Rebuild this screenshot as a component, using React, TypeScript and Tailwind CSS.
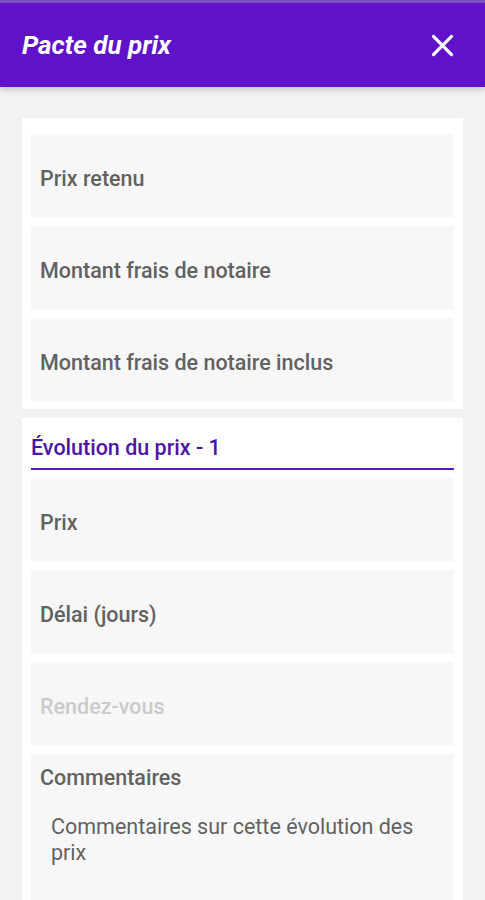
import React from 'react';

const fields = ['Prix retenu', 'Montant frais de notaire', 'Montant frais de notaire inclus'];

const Field = ({ label, placeholder }: { label: string; placeholder?: boolean }) => (
  <div className="h-[83px] bg-[#f7f7f7] flex items-center pt-2 px-[9px]">
    <span className={`text-[21.5px] font-medium ${placeholder ? 'text-[#cbcbcb]' : 'text-[#626262]'}`}>{label}</span>
  </div>
);

const App: React.FC = () => {
  return (
    <div className="min-h-screen bg-[#f2f2f2] overflow-hidden" style={{ fontFamily: 'Roboto, "Noto Sans", sans-serif' }}>
      {/* header */}
      <div className="border-t-[3px] border-[#7a4cc6] bg-[#5f12c9] h-[87px] flex items-center justify-between pl-[22px] pr-[27px] shadow-[0_3px_6px_rgba(0,0,0,0.18)]">
        <h1 className="text-white text-[26px] font-bold italic">Pacte du prix</h1>
        <svg width="31" height="31" viewBox="0 0 24 24" fill="none" stroke="white" strokeWidth="2.5" strokeLinecap="round">
          <path d="M5 5L19 19M19 5L5 19" />
        </svg>
      </div>

      <div className="px-[22px] pt-[31px] flex flex-col gap-[9px]">
        <div className="bg-white px-[9px] pt-4 pb-2 flex flex-col gap-[9px]">
          {fields.map(f => (
            <Field key={f} label={f} />
          ))}
        </div>

        <div className="bg-white px-[9px] flex flex-col">
          <div className="h-[52px] flex items-end pb-[4px] border-b-2 border-[#5a19b8]">
            <span className="text-[21.5px] font-medium text-[#4c14a6]">Évolution du prix - 1</span>
          </div>
          <div className="flex flex-col gap-[9px] pt-2">
            <Field label="Prix" />
            <Field label="Délai (jours)" />
            <Field label="Rendez-vous" placeholder />
            <div className="bg-[#f7f7f7] px-[9px] pt-[8px] h-[200px]">
              <div className="text-[21.5px] font-medium text-[#626262]">Commentaires</div>
              <div className="mt-[20px] pl-[11px] pr-[20px] text-[21.5px] leading-[26px] text-[#626262]">
                Commentaires sur cette évolution des prix
              </div>
            </div>
          </div>
        </div>
      </div>
    </div>
  );
};

export default App;
